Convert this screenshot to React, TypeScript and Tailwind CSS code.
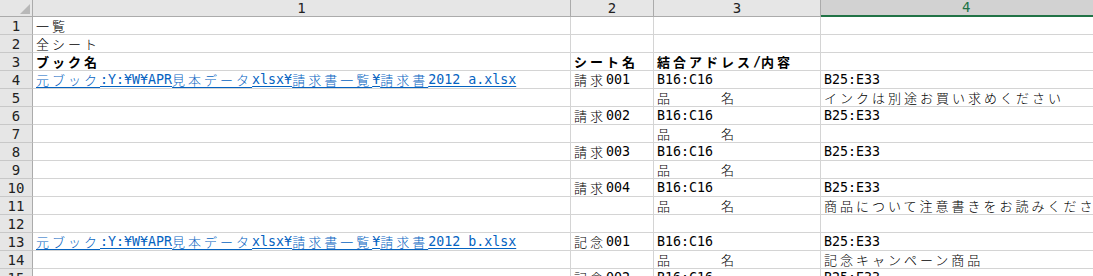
import React from "react";

const RUN = /[\x20-\x7E\u00A5]+|[^\x20-\x7E\u00A5]+/g;
const HALF = /^[\x20-\x7E\u00A5]/;

function T({ s }: { s: string }) {
  const parts = s.match(RUN) || [];
  return (
    <>
      {parts.map((p, i) =>
        HALF.test(p) ? (
          <span key={i} className="font-['DejaVu_Sans_Mono',monospace] text-[13.3px] whitespace-pre">
            {p}
          </span>
        ) : (
          <span key={i} className="font-['Noto_Sans_CJK_JP',sans-serif] text-[13px] tracking-[3px] whitespace-pre">
            {p}
          </span>
        )
      )}
    </>
  );
}

type Cell = { t?: string; bold?: boolean; link?: boolean };
type Row = [Cell, Cell, Cell, Cell];

const E: Cell = {};
const rows: Row[] = [
  [{ t: "一覧" }, E, E, E],
  [{ t: "全シート" }, E, E, E],
  [{ t: "ブック名", bold: true }, { t: "シート名", bold: true }, { t: "結合アドレス/内容", bold: true }, E],
  [{ t: "元ブック:Y:¥W¥APR見本データxlsx¥請求書一覧¥請求書2012 a.xlsx", link: true }, { t: "請求001" }, { t: "B16:C16" }, { t: "B25:E33" }],
  [E, E, { t: "品　　　名" }, { t: "インクは別途お買い求めください" }],
  [E, { t: "請求002" }, { t: "B16:C16" }, { t: "B25:E33" }],
  [E, E, { t: "品　　　名" }, E],
  [E, { t: "請求003" }, { t: "B16:C16" }, { t: "B25:E33" }],
  [E, E, { t: "品　　　名" }, E],
  [E, { t: "請求004" }, { t: "B16:C16" }, { t: "B25:E33" }],
  [E, E, { t: "品　　　名" }, { t: "商品について注意書きをお読みください" }],
  [E, E, E, E],
  [{ t: "元ブック:Y:¥W¥APR見本データxlsx¥請求書一覧¥請求書2012 b.xlsx", link: true }, { t: "記念001" }, { t: "B16:C16" }, { t: "B25:E33" }],
  [E, E, { t: "品　　　名" }, { t: "記念キャンペーン商品" }],
  [E, { t: "記念002" }, { t: "B16:C16" }, { t: "B25:E33" }],
];

function DataCell({ c, last }: { c: Cell; last?: boolean }) {
  return (
    <div
      className={
        "h-[18px] border-b border-[#d4d4d4] flex items-end pl-[3px] leading-[16px] whitespace-nowrap overflow-visible " +
        (last ? "" : "border-r ") +
        (c.bold ? "font-bold " : "font-light ") +
        (c.link ? "text-[#0563c1] underline decoration-1 underline-offset-2 " : "text-black ")
      }
    >
      {c.t ? <T s={c.t} /> : null}
    </div>
  );
}

export default function App() {
  return (
    <div className="w-[1093px] h-[276px] overflow-hidden bg-white">
      <div className="grid grid-cols-[33px_538px_83px_167px_1fr]">
        {/* header row */}
        <div className="h-[17px] bg-[#e6e6e6] border-r border-b border-[#ababab] relative">
          <svg className="absolute right-[2px] bottom-[2px]" width="10" height="10" viewBox="0 0 10 10">
            <polygon points="10,0 10,10 0,10" fill="#b8b8b8" />
          </svg>
        </div>
        {["1", "2", "3"].map((n) => (
          <div
            key={n}
            className="h-[17px] bg-[#e6e6e6] border-r border-b border-[#ababab] flex items-end justify-center leading-[16px] text-[#222] font-['DejaVu_Sans_Mono',monospace] text-[14px]"
          >
            {n}
          </div>
        ))}
        <div className="h-[17px] bg-[#d2d2d2] border-b-2 border-[#217346] flex items-end justify-center leading-[15px] text-[#217346] font-['DejaVu_Sans_Mono',monospace] text-[14px]">
          4
        </div>

        {rows.map((r, i) => (
          <React.Fragment key={i}>
            <div className="h-[18px] bg-[#e6e6e6] border-r border-b border-r-[#ababab] border-b-[#c8c8c8] flex items-end justify-center leading-[16px] text-[#222] font-['DejaVu_Sans_Mono',monospace] text-[14px]">
              {i + 1}
            </div>
            <DataCell c={r[0]} />
            <DataCell c={r[1]} />
            <DataCell c={r[2]} />
            <DataCell c={r[3]} last />
          </React.Fragment>
        ))}
      </div>
    </div>
  );
}
